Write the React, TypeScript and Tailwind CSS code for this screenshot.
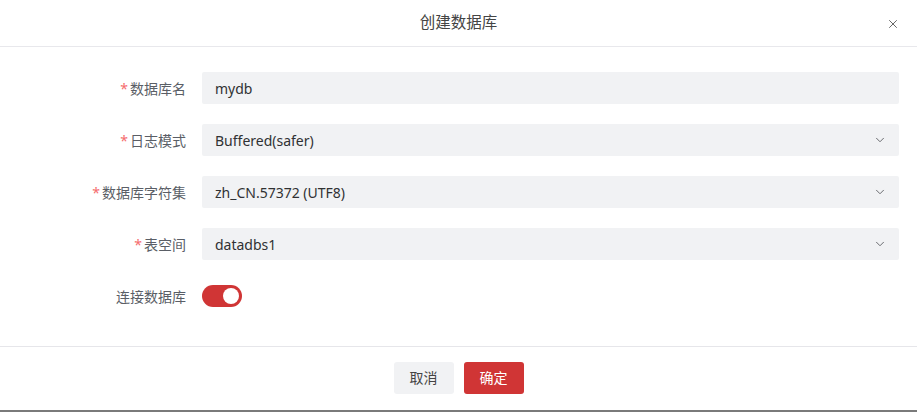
import { X, ChevronDown } from "lucide-react";

type Field = {
  label: string;
  value: string;
  required?: boolean;
  select?: boolean;
};

const fields: Field[] = [
  { label: "数据库名", value: "mydb", required: true },
  { label: "日志模式", value: "Buffered(safer)", required: true, select: true },
  { label: "数据库字符集", value: "zh_CN.57372 (UTF8)", required: true, select: true },
  { label: "表空间", value: "datadbs1", required: true, select: true },
];

const font = "font-['Noto_Sans','Noto_Sans_CJK_SC',sans-serif]";

function FieldRow({ field }: { field: Field }) {
  return (
    <div className="flex h-8 items-center">
      <label className="flex w-[186px] shrink-0 items-center justify-end text-[14px] text-[#5a5e66]">
        {field.required && <span className="mr-[2px] text-[#f56c6c]">*</span>}
        {field.label}
      </label>
      <div className="ml-4 flex h-8 flex-1 items-center justify-between rounded-[2px] bg-[#f1f2f4] pl-[13px] pr-[12px] text-[14px] text-[#303133]">
        <span>{field.value}</span>
        {field.select && <ChevronDown className="h-[14px] w-[14px] text-[#606266]" strokeWidth={1.6} />}
      </div>
    </div>
  );
}

export default function App() {
  return (
    <div className={`flex h-[412px] w-[917px] flex-col bg-white ${font}`}>
      <div className="relative flex h-[47px] shrink-0 items-center justify-center border-b border-[#e8e8ec]">
        <span className="text-[15.5px] text-[#444]">创建数据库</span>
        <button type="button" className="absolute right-[17px] top-[17px] text-[#666]">
          <X className="h-[14px] w-[14px]" strokeWidth={1.7} />
        </button>
      </div>

      <div className="flex flex-1 flex-col gap-5 pr-[18px] pt-[25px]">
        {fields.map((f) => (
          <FieldRow key={f.label} field={f} />
        ))}
        <div className="flex h-8 items-center">
          <label className="w-[186px] shrink-0 text-right text-[14px] text-[#5a5e66]">连接数据库</label>
          <div className="ml-4 flex h-[22px] w-10 items-center justify-end rounded-full bg-[#d03535] pr-[3px]">
            <div className="h-4 w-4 rounded-full bg-white" />
          </div>
        </div>
      </div>

      <div className="flex h-[64px] shrink-0 items-center justify-center gap-[10px] border-t border-[#e6e6ea] pb-[2px]">
        <button type="button" className="h-8 w-[60px] rounded-[3px] bg-[#f1f2f4] text-[14px] text-[#444]">
          取消
        </button>
        <button type="button" className="h-8 w-[60px] rounded-[3px] bg-[#d03535] text-[14px] text-white">
          确定
        </button>
      </div>
      <div className="h-[2px] shrink-0 bg-[#7a7a7a]" />
    </div>
  );
}
